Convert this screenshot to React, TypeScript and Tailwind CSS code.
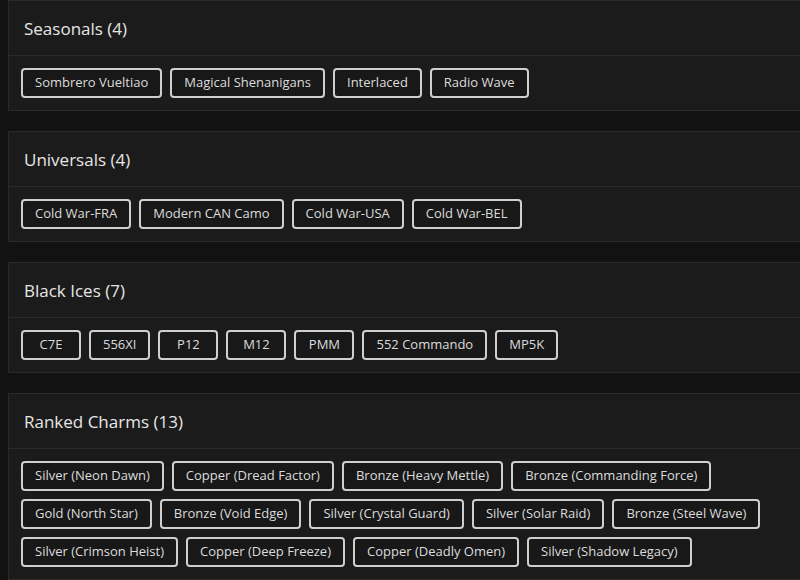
const sections = [
  {
    title: "Seasonals (4)",
    items: ["Sombrero Vueltiao", "Magical Shenanigans", "Interlaced", "Radio Wave"],
  },
  {
    title: "Universals (4)",
    items: ["Cold War-FRA", "Modern CAN Camo", "Cold War-USA", "Cold War-BEL"],
  },
  {
    title: "Black Ices (7)",
    items: ["C7E", "556XI", "P12", "M12", "PMM", "552 Commando", "MP5K"],
  },
  {
    title: "Ranked Charms (13)",
    items: [
      "Silver (Neon Dawn)",
      "Copper (Dread Factor)",
      "Bronze (Heavy Mettle)",
      "Bronze (Commanding Force)",
      "Gold (North Star)",
      "Bronze (Void Edge)",
      "Silver (Crystal Guard)",
      "Silver (Solar Raid)",
      "Bronze (Steel Wave)",
      "Silver (Crimson Heist)",
      "Copper (Deep Freeze)",
      "Copper (Deadly Omen)",
      "Silver (Shadow Legacy)",
    ],
  },
];

function Section({ title, items }: { title: string; items: string[] }) {
  return (
    <div className="mb-5 bg-[#1b1b1b] border border-[#2a2a2a] -mr-4">
      {/* header is border-box, so 55px includes the bottom border */}
      <div className="h-[55px] flex items-center pl-[15px] border-b border-[#2a2a2a]">
        <h2 className="text-[17px] font-medium text-[#e6e6e6] pt-px">{title}</h2>
      </div>
      <div className="p-3 flex flex-wrap gap-2">
        {items.map((item) => (
          <span
            key={item}
            className="h-[30px] min-w-[60px] px-3 flex items-center justify-center border-2 border-[#cfcfcf] rounded-[4px] text-[13px] text-[#dcdcdc] bg-[#181818]"
          >
            {item}
          </span>
        ))}
      </div>
    </div>
  );
}

export default function App() {
  return (
    <div
      className="min-h-[580px] w-[800px] overflow-hidden bg-[#121212] pl-2"
      style={{ fontFamily: '"Open Sans", "Liberation Sans", sans-serif' }}
    >
      {sections.map((s) => (
        <Section key={s.title} title={s.title} items={s.items} />
      ))}
    </div>
  );
}
